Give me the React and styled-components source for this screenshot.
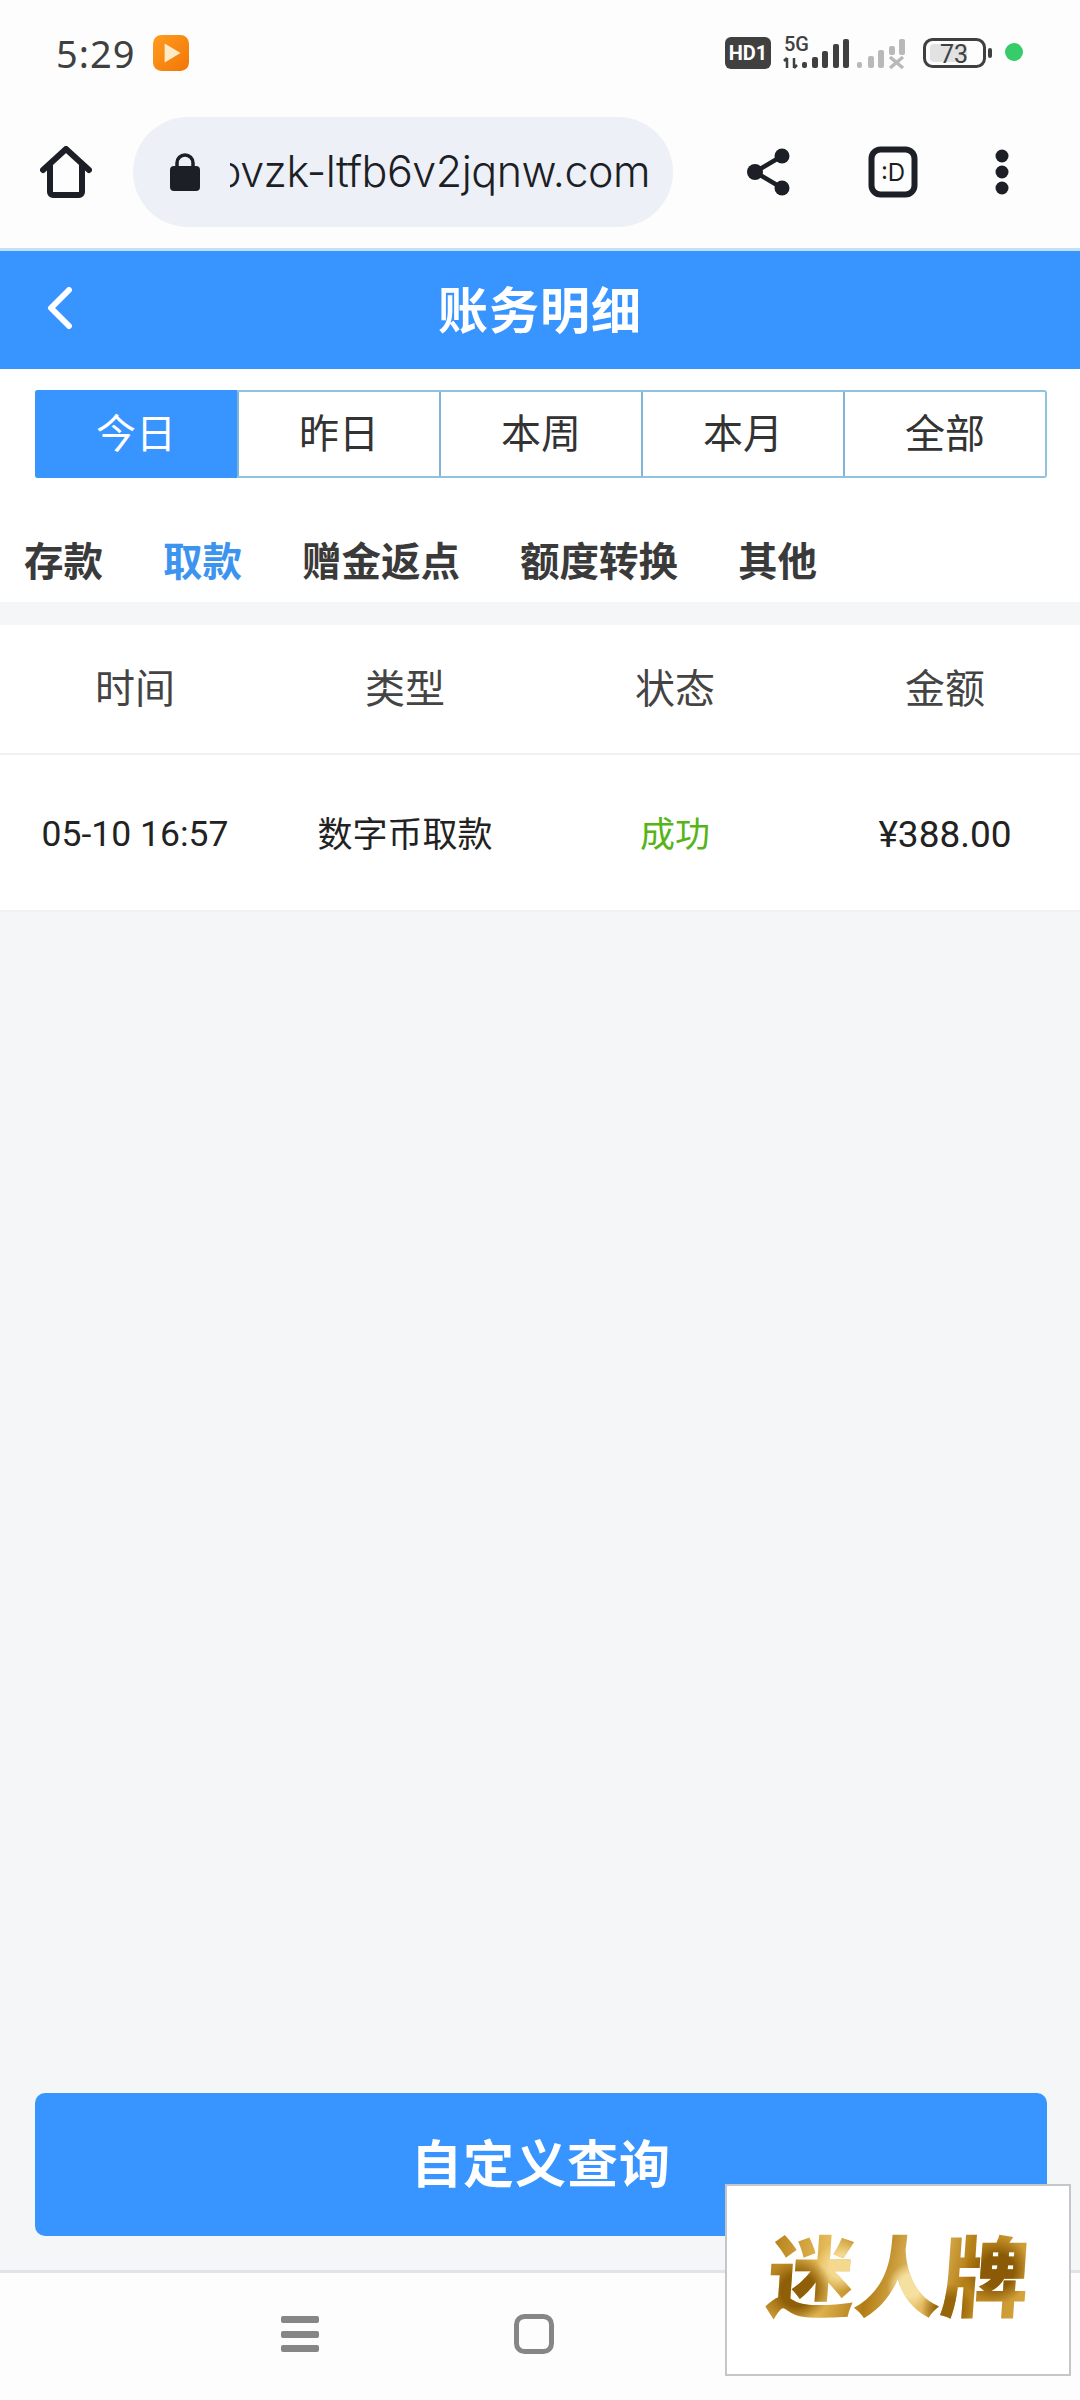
import styled, { createGlobalStyle } from "styled-components";

const GlobalStyle = createGlobalStyle`
  html, body {
    margin: 0;
    padding: 0;
    background: #f4f6f8;
  }
  * {
    box-sizing: border-box;
  }
`;

const Page = styled.div`
  position: relative;
  width: 1080px;
  height: 2400px;
  display: flex;
  flex-direction: column;
  overflow: hidden;
  background: #f4f6f8;
  font-family: Roboto, "Noto Sans CJK SC", sans-serif;
  color: #333;
`;

const StatusBar = styled.div`
  height: 106px;
  flex: none;
  padding: 0 50px 0 56px;
  display: flex;
  align-items: center;
  justify-content: space-between;
  background: #fdfdfe;
`;

const StatusLeft = styled.div`
  display: flex;
  align-items: center;
  gap: 18px;
`;

const Clock = styled.span`
  font-family: "Noto Sans", sans-serif;
  font-size: 38px;
  letter-spacing: 1px;
  color: #404040;
`;

const StatusRight = styled.div`
  display: flex;
  align-items: center;
`;

const BrowserBar = styled.div`
  height: 145px;
  flex: none;
  display: flex;
  align-items: center;
  padding: 0 0 10px 40px;
  background: #fdfdfe;
  border-bottom: 3px solid #c4e0f5;
`;

const UrlPill = styled.div`
  width: 540px;
  height: 110px;
  margin-left: 41px;
  border-radius: 55px;
  background: #edf0f6;
  display: flex;
  align-items: center;
  padding: 0 23px 0 37px;
`;

const UrlClip = styled.div`
  flex: 1;
  margin-left: 30px;
  padding-bottom: 2px;
  overflow: hidden;
  display: flex;
  justify-content: flex-end;
`;

const UrlText = styled.span`
  flex: none;
  font-family: Inter, sans-serif;
  font-size: 43px;
  font-weight: 300;
  letter-spacing: -0.5px;
  color: #1c1f26;
`;

const BrowserActions = styled.div`
  display: flex;
  align-items: center;
  margin-left: 74px;
  gap: 77px;
`;

const Header = styled.div`
  height: 118px;
  flex: none;
  position: relative;
  display: flex;
  align-items: center;
  justify-content: center;
  background: #3894ff;
`;

const BackButton = styled.div`
  position: absolute;
  left: 47px;
  top: 36px;
  display: flex;
`;

const Title = styled.h1`
  margin: 0;
  padding-bottom: 6px;
  font-size: 50px;
  font-weight: 700;
  letter-spacing: 1px;
  color: #fff;
`;

const WhiteBlock = styled.div`
  flex: none;
  padding-top: 21px;
  background: #fff;
`;

const RangeTabs = styled.div`
  display: grid;
  grid-template-columns: repeat(5, 1fr);
  height: 88px;
  margin: 0 33px 0 35px;
  border: 2px solid #8fc3e0;
  border-left: 0;
  border-radius: 3px;
`;

const RangeTab = styled.div`
  display: flex;
  align-items: center;
  justify-content: center;
  padding-bottom: 6px;
  font-size: 40px;
  color: ${({ $active }) => ($active ? "#fff" : "#333")};
  background: ${({ $active }) => ($active ? "#3894ff" : "#fff")};
  margin: ${({ $active }) => ($active ? "-2px 0" : "0")};
  border-left: ${({ $active }) => ($active ? "0" : "2px solid #7fb5d6")};
  border-radius: ${({ $active }) => ($active ? "3px 0 0 3px" : "0")};
`;

const TypeTabs = styled.div`
  display: flex;
  align-items: center;
  gap: 60px;
  height: 124px;
  padding: 36px 0 0 24px;
`;

const TypeTab = styled.span`
  font-size: 39.5px;
  font-weight: 700;
  color: ${({ $active }) => ($active ? "#3d94ee" : "#3a3a3a")};
`;

const Table = styled.div`
  flex: none;
  margin-top: 23px;
  background: #fff;
`;

const TableRow = styled.div`
  display: grid;
  grid-template-columns: repeat(4, 1fr);
  height: ${({ $head }) => ($head ? "130px" : "157px")};
  border-bottom: 2px solid #f0f1f3;
`;

const Cell = styled.div`
  display: flex;
  align-items: center;
  justify-content: center;
  white-space: nowrap;
  padding-bottom: ${({ $head }) => ($head ? "6px" : "2px")};
  font-size: ${({ $head }) => ($head ? "40px" : "35px")};
  color: ${({ $color, $head }) => $color || ($head ? "#444" : "#222")};
`;

const NumberCell = styled(Cell)`
  padding: 3px 0 0;
  font-size: ${({ $size }) => $size};
`;

const QueryButton = styled.div`
  flex: none;
  height: 143px;
  margin: auto 33px 34px 35px;
  padding-bottom: 8px;
  display: flex;
  align-items: center;
  justify-content: center;
  border-radius: 10px;
  background: #3894ff;
  color: #fff;
  font-size: 51px;
  font-weight: 700;
  letter-spacing: 1px;
`;

const NavBar = styled.div`
  height: 130px;
  flex: none;
  display: flex;
  align-items: center;
  padding: 0 0 6px 281px;
  gap: 195px;
  background: #fdfdfe;
  border-top: 3px solid #e1e3e7;
`;

const LogoBox = styled.div`
  position: absolute;
  left: 725px;
  top: 2184px;
  width: 346px;
  height: 192px;
  display: flex;
  align-items: center;
  justify-content: center;
  background: #fff;
  border: 2px solid #c4c6c9;
`;

const LogoText = styled.span`
  font-size: 88px;
  font-weight: 900;
  line-height: 1.1;
  letter-spacing: -1px;
  transform: skewX(-4deg);
  background:
    radial-gradient(circle at 12% 60%, #8f5f08 0 7%, transparent 14%),
    radial-gradient(circle at 28% 35%, #f3d88e 0 6%, transparent 13%),
    radial-gradient(circle at 55% 55%, #f6e0a0 0 7%, transparent 15%),
    radial-gradient(circle at 70% 80%, #97660b 0 6%, transparent 13%),
    radial-gradient(circle at 88% 40%, #8a5a07 0 7%, transparent 14%),
    linear-gradient(100deg, #b27c14 0%, #e6bc5a 22%, #b27c14 40%, #ecc873 58%, #b57f16 74%, #d9a943 100%);
  -webkit-background-clip: text;
  background-clip: text;
  color: transparent;
`;

function PlayBadge() {
  return (
    <svg width="36" height="36" viewBox="0 0 34 34">
      <defs>
        <linearGradient id="badge" x1="0" y1="0" x2="1" y2="1">
          <stop offset="0" stopColor="#ff9d1e" />
          <stop offset="1" stopColor="#f27508" />
        </linearGradient>
      </defs>
      <rect width="34" height="34" rx="8" fill="url(#badge)" />
      <path d="M11 8l15 9-15 9z" fill="#fdebc8" />
    </svg>
  );
}

// coordinates are page pixels, the viewBox starts where the icons start
function StatusIcons() {
  const dark = "#404040";
  const grey = "#b9b9b9";
  return (
    <svg width="305" height="48" viewBox="725 30 305 48">
      <rect x="725" y="38" width="46" height="32" rx="6" fill={dark} />
      <text x="748" y="61" textAnchor="middle" fontFamily="Roboto, sans-serif" fontWeight="700" fontSize="20" fill="#fff">HD1</text>
      <text x="784" y="52" fontFamily="Roboto, sans-serif" fontWeight="500" fontSize="20" fill={dark}>5G</text>
      <path d="M787 59v10M784 62l3-3M794 59v10M794 69l3-3" stroke={dark} strokeWidth="2.5" fill="none" />
      <rect x="802" y="63" width="5" height="6" rx="2" fill={dark} />
      <rect x="812" y="58" width="6" height="11" rx="2" fill={dark} />
      <rect x="822" y="52" width="6" height="17" rx="2" fill={dark} />
      <rect x="833" y="45" width="6" height="24" rx="2" fill={dark} />
      <rect x="843" y="40" width="6" height="29" rx="2" fill={dark} />
      <rect x="857" y="63" width="5" height="6" rx="2" fill={grey} />
      <rect x="868" y="57" width="6" height="12" rx="2" fill={grey} />
      <rect x="878" y="51" width="6" height="18" rx="2" fill={grey} />
      <rect x="889" y="47" width="6" height="9" rx="2" fill={grey} />
      <rect x="899" y="40" width="6" height="16" rx="2" fill={grey} />
      <path d="M890 58l13 11M903 58l-13 11" stroke={grey} strokeWidth="3.5" />
      <rect x="924.5" y="40.5" width="60" height="27" rx="8" fill="none" stroke={dark} strokeWidth="3" />
      <rect x="930" y="45" width="37" height="18" rx="4" fill="#e2e2e2" />
      <text x="954" y="64" textAnchor="middle" fontFamily="Roboto, sans-serif" fontSize="25" fill={dark}>73</text>
      <rect x="988" y="49" width="4" height="10" rx="2" fill={dark} />
      <circle cx="1014" cy="53" r="9" fill="#37cc6a" />
    </svg>
  );
}

function HomeIcon() {
  return (
    <svg width="52" height="52" viewBox="0 0 52 52" fill="none" stroke="#1c1f26" strokeWidth="6" strokeLinejoin="round" strokeLinecap="round">
      <path d="M3 24L26 3l23 21" />
      <path d="M10 20v26a3 3 0 0 0 3 3h26a3 3 0 0 0 3-3V20" />
    </svg>
  );
}

function LockIcon() {
  return (
    <svg width="30" height="38" viewBox="0 0 30 38">
      <path d="M7 15V10a8 8 0 0 1 16 0v5" fill="none" stroke="#1c1f26" strokeWidth="3.5" />
      <rect x="0" y="13" width="30" height="25" rx="4" fill="#1c1f26" />
    </svg>
  );
}

function ShareIcon() {
  return (
    <svg width="44" height="48" viewBox="0 0 44 48" fill="#1c1f26">
      <circle cx="35" cy="8" r="7.5" />
      <circle cx="8" cy="24" r="8" />
      <circle cx="35" cy="40" r="7.5" />
      <path d="M35 8L8 24l27 16" fill="none" stroke="#1c1f26" strokeWidth="4.5" />
    </svg>
  );
}

function TabsIcon() {
  return (
    <svg width="50" height="52" viewBox="0 0 50 52">
      <rect x="3.5" y="3.5" width="43" height="45" rx="9" fill="none" stroke="#1c1f26" strokeWidth="6" />
      <text x="25" y="35" textAnchor="middle" fontFamily="Inter, sans-serif" fontSize="24" fill="#1c1f26">:D</text>
    </svg>
  );
}

function MoreIcon() {
  return (
    <svg width="14" height="46" viewBox="0 0 14 46" fill="#1c1f26">
      <circle cx="7" cy="7" r="6.5" />
      <circle cx="7" cy="23" r="6.5" />
      <circle cx="7" cy="39" r="6.5" />
    </svg>
  );
}

function BackIcon() {
  return (
    <svg width="26" height="42" viewBox="0 0 26 42" fill="none" stroke="#fff" strokeWidth="6" strokeLinecap="round" strokeLinejoin="round">
      <path d="M22 3L4 21l18 18" />
    </svg>
  );
}

function MenuIcon() {
  return (
    <svg width="38" height="36" viewBox="0 0 38 36" fill="#868686">
      <rect y="0" width="38" height="7" rx="2" />
      <rect y="15" width="38" height="7" rx="2" />
      <rect y="29" width="38" height="7" rx="2" />
    </svg>
  );
}

function SquareIcon() {
  return (
    <svg width="40" height="40" viewBox="0 0 40 40" fill="none" stroke="#868686" strokeWidth="5">
      <rect x="2.5" y="2.5" width="35" height="35" rx="8" />
    </svg>
  );
}

const ranges = ["今日", "昨日", "本周", "本月", "全部"];
const types = ["存款", "取款", "赠金返点", "额度转换", "其他"];
const columns = ["时间", "类型", "状态", "金额"];

export default function App() {
  return (
    <Page>
      <GlobalStyle />
      <StatusBar>
        <StatusLeft>
          <Clock>5:29</Clock>
          <PlayBadge />
        </StatusLeft>
        <StatusRight>
          <StatusIcons />
        </StatusRight>
      </StatusBar>
      <BrowserBar>
        <HomeIcon />
        <UrlPill>
          <LockIcon />
          <UrlClip>
            <UrlText>ovzk-ltfb6v2jqnw.com</UrlText>
          </UrlClip>
        </UrlPill>
        <BrowserActions>
          <ShareIcon />
          <TabsIcon />
          <MoreIcon />
        </BrowserActions>
      </BrowserBar>
      <Header>
        <BackButton>
          <BackIcon />
        </BackButton>
        <Title>账务明细</Title>
      </Header>
      <WhiteBlock>
        <RangeTabs>
          {ranges.map((r, i) => (
            <RangeTab key={r} $active={i === 0}>{r}</RangeTab>
          ))}
        </RangeTabs>
        <TypeTabs>
          {types.map((t, i) => (
            <TypeTab key={t} $active={i === 1}>{t}</TypeTab>
          ))}
        </TypeTabs>
      </WhiteBlock>
      <Table>
        <TableRow $head>
          {columns.map((c) => (
            <Cell key={c} $head>{c}</Cell>
          ))}
        </TableRow>
        <TableRow>
          <NumberCell $size="35.5px">05-10 16:57</NumberCell>
          <Cell>数字币取款</Cell>
          <Cell $color="#56b416">成功</Cell>
          <NumberCell $size="37px">¥388.00</NumberCell>
        </TableRow>
      </Table>
      <QueryButton>自定义查询</QueryButton>
      <NavBar>
        <MenuIcon />
        <SquareIcon />
      </NavBar>
      <LogoBox>
        <LogoText>迷人牌</LogoText>
      </LogoBox>
    </Page>
  );
}
